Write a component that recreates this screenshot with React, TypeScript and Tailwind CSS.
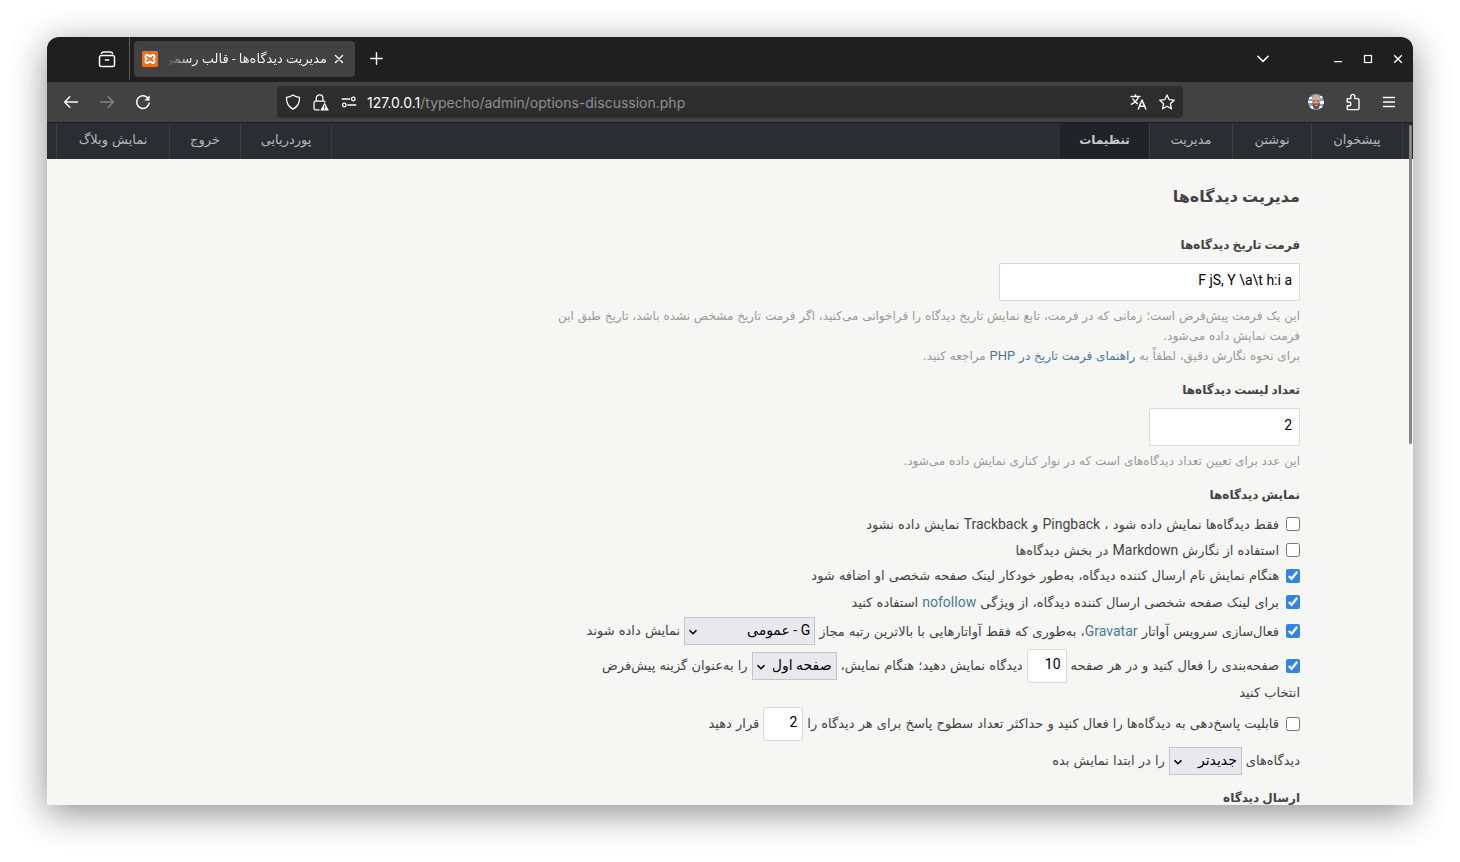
import type { ReactNode } from "react";

const MENU = [
  { text: "پیشخوان", width: "w-[91px]", active: false },
  { text: "نوشتن", width: "w-[79px]", active: false },
  { text: "مدیریت", width: "w-[83px]", active: false },
  { text: "تنظیمات", width: "w-[89px]", active: true }
];

const ACCOUNT = [
  { text: "پوردریایی", width: "w-[91px]" },
  { text: "خروج", width: "w-[71px]" },
  { text: "نمایش وبلاگ", width: "w-[113px]" }
];

function TabStrip() {
  return (
    <div className="flex h-[45px] shrink-0 items-center bg-[#1f1f1f] pb-0.5 text-[#fbfbfe]">
      <button aria-label="Recent browsing" className="ml-[51px] flex h-full w-[18px] items-center justify-center">
        <svg width="18" height="18" viewBox="0 0 18 18" fill="none" stroke="currentColor" strokeWidth="1.5" strokeLinecap="round">
          <path d="M3.4 3.6c.3-1.1 1-1.7 2.2-1.7h6.8c1.2 0 1.9.6 2.2 1.7" />
          <rect x="1.5" y="5.6" width="15" height="11" rx="2" />
          <path d="M7.4 10h3.2" />
        </svg>
      </button>
      <div className="ml-[13px] h-full w-px bg-[#5a5a5a]" />

      {/* Active tab */}
      <div className="ml-1 flex h-9 w-[221px] items-center rounded bg-[#424242] pr-[11px] pl-2">
        <svg width="16" height="16" viewBox="0 0 16 16" className="shrink-0">
          <rect width="16" height="16" rx="1.5" fill="#ee6f1f" />
          <g fill="none" stroke="#fff" strokeWidth="1.9" strokeLinecap="round" strokeLinejoin="round">
            <path d="M7.2 5.2C6 3.2 3.4 3.7 3.4 5.7c0 1.2.6 1.6 1.3 2.3-.7.7-1.3 1.1-1.3 2.3 0 2 2.6 2.5 3.8.5" />
            <path d="M8.8 5.2C10 3.2 12.6 3.7 12.6 5.7c0 1.2-.6 1.6-1.3 2.3.7.7 1.3 1.1 1.3 2.3 0 2-2.6 2.5-3.8.5" />
            <path d="M7.2 5.2c.4.5 1.2.5 1.6 0M7.2 10.8c.4-.5 1.2-.5 1.6 0" />
          </g>
        </svg>
        <span
          dir="rtl"
          className="ml-2 flex-1 overflow-hidden bg-gradient-to-l from-[#fbfbfe] from-85% to-[#424242] bg-clip-text font-[Roboto,'DejaVu_Sans',sans-serif] text-[13px] whitespace-nowrap text-transparent"
        >
          مدیریت دیدگاه‌ها - قالب رسمی
        </span>
        <button aria-label="Close tab" className="ml-[7px]">
          <svg width="10" height="10" viewBox="0 0 10 10" stroke="currentColor" strokeWidth="1.4" strokeLinecap="round">
            <path d="M1.5 1.5l7 7M8.5 1.5l-7 7" />
          </svg>
        </button>
      </div>
      <button aria-label="New tab" className="ml-[15px]">
        <svg width="13" height="13" viewBox="0 0 13 13" stroke="currentColor" strokeWidth="1.4" strokeLinecap="round">
          <path d="M6.5.8v11.4M.8 6.5h11.4" />
        </svg>
      </button>

      {/* Window buttons */}
      <div className="ml-auto flex items-center pr-[10px]">
        <button aria-label="List all tabs" className="mr-16">
          <svg width="12" height="8" viewBox="0 0 12 8" fill="none" stroke="currentColor" strokeWidth="1.5" strokeLinecap="round" strokeLinejoin="round">
            <path d="M.9 1.2L6 6.4l5.1-5.2" />
          </svg>
        </button>
        <button aria-label="Minimize" className="mr-5">
          <svg width="10" height="10" viewBox="0 0 10 10">
            <path d="M1 7h8v1.2H1z" fill="currentColor" />
          </svg>
        </button>
        <button aria-label="Maximize" className="mr-5">
          <svg width="10" height="10" viewBox="0 0 10 10" fill="none" stroke="currentColor" strokeWidth="1.2">
            <rect x="1.5" y="1.5" width="7" height="7" />
          </svg>
        </button>
        <button aria-label="Close">
          <svg width="10" height="10" viewBox="0 0 10 10" stroke="currentColor" strokeWidth="1.4">
            <path d="M1.2 1.2l7.6 7.6M8.8 1.2L1.2 8.8" />
          </svg>
        </button>
      </div>
    </div>
  );
}

function Toolbar() {
  return (
    <div className="flex h-10 shrink-0 items-center bg-[#424242] text-[#fbfbfe]">
      <div className="flex items-center gap-5 pl-4">
        <button aria-label="Back">
          <svg width="16" height="16" viewBox="0 0 16 16" fill="none" stroke="currentColor" strokeWidth="1.5" strokeLinecap="round" strokeLinejoin="round">
            <path d="M14.5 8H1.8M6.8 2.8L1.6 8l5.2 5.2" />
          </svg>
        </button>
        <button aria-label="Forward" className="text-[#858585]">
          <svg width="16" height="16" viewBox="0 0 16 16" fill="none" stroke="currentColor" strokeWidth="1.5" strokeLinecap="round" strokeLinejoin="round">
            <path d="M1.5 8h12.7M9.2 2.8L14.4 8l-5.2 5.2" />
          </svg>
        </button>
        <button aria-label="Reload">
          <svg width="16" height="16" viewBox="0 0 16 16" fill="none" stroke="currentColor" strokeWidth="1.5" strokeLinecap="round">
            <path d="M14.2 9.2A6.3 6.3 0 1 1 12.4 3.6" />
            <path d="M14.6 1.2v5.2H9.4z" fill="currentColor" stroke="none" />
          </svg>
        </button>
      </div>

      {/* Address bar */}
      <div className="mr-[125px] ml-[126px] flex h-8 flex-1 items-center rounded bg-[#2d2d2d] px-2">
        <div className="flex shrink-0 items-center gap-3">
          <svg width="16" height="16" viewBox="0 0 16 16" fill="none" stroke="currentColor" strokeWidth="1.3" strokeLinejoin="round">
            <path d="M8 .9c1.9 1.5 4.1 2.3 6.5 2.4.3 5.3-1.5 9.3-6.5 11.8C3 12.6 1.2 8.6 1.5 3.3 3.9 3.2 6.1 2.4 8 .9z" />
          </svg>
          <svg width="16" height="17" viewBox="0 0 16 17" fill="none" stroke="currentColor" strokeWidth="1.3">
            <path d="M3.3 7V4.1a3.3 3.3 0 0 1 6.6 0V7M6.5 15.8H2.6A1.6 1.6 0 0 1 1 14.2V8.8c0-1 .7-1.7 1.6-1.7h8c.9 0 1.4.5 1.6 1.3" />
            <path d="M11.6 8.6l4.3 8H7.3z" fill="currentColor" stroke="none" />
            <path d="M11.6 11.4v2.4M11.6 14.6v1" stroke="#2d2d2d" strokeWidth="1.1" />
          </svg>
          <svg width="16" height="12" viewBox="0 0 16 12" fill="none" stroke="currentColor" strokeWidth="1.3">
            <path d="M.8 3h8.400M6.400 9h8.800" />
            <circle cx="12.3" cy="3" r="1.8" />
            <circle cx="3.3" cy="9" r="1.8" />
          </svg>
        </div>
        <div dir="ltr" className="ml-[10px] flex-1 font-[Inter,sans-serif] text-[14px] whitespace-nowrap text-[#8f8f92]">
          <span className="text-[#fbfbfe]">127.0.0.1</span>/typecho/admin/options-discussion.php
        </div>
        <div className="flex items-center gap-3">
          <button aria-label="Translate page">
            <svg width="17" height="16" viewBox="0 0 17 16" fill="none" stroke="currentColor" strokeWidth="1.5" strokeLinecap="round" strokeLinejoin="round">
              <path d="M1 2.5h9M5.5.8v1.7M8.4 2.6C7.6 6 5 8.6 1.4 10.2M3 5c1.1 2 2.4 3.4 4.4 4.6" />
              <path d="M8.3 15L12 6l3.800 9M9.500 12.200h5" />
            </svg>
          </button>
          <button aria-label="Bookmark this page">
            <svg width="16" height="16" viewBox="0 0 16 16" fill="none" stroke="currentColor" strokeWidth="1.3" strokeLinejoin="round">
              <path d="M8 .9l2.1 4.7 5.1.6-3.8 3.5 1 5.1L8 12.3l-4.4 2.5 1-5.1L.8 6.2l5.1-.6z" />
            </svg>
          </button>
        </div>
      </div>

      <div className="flex items-center gap-[21px] pr-[17px]">
        <button aria-label="Account">
          <svg width="16" height="16" viewBox="0 0 16 16">
            <defs>
              <clipPath id="avatar">
                <circle cx="8" cy="8" r="8" />
              </clipPath>
            </defs>
            <g clipPath="url(#avatar)">
              <rect width="16" height="16" fill="#7fa6cf" />
              <path d="M0 3h4v2H0zM12 2h4v2h-4zM0 7h4v2H0zM12 7h4v3h-4zM2 12h3v3H2zM11 12h4v2h-4z" fill="#f4f7fa" />
              <ellipse cx="8.2" cy="7" rx="4.2" ry="6.4" fill="#d9aa8c" />
              <path d="M4.2 8.6c1.6.8 1.6 1.4 4 .6 2.4.8 2.6.2 4-.6l-.8 4.4-3.2 2.8L5 13z" fill="#7a4c3a" />
              <path d="M5.3 7h2.2M9 7h2.2" stroke="#4a2f26" strokeWidth="1.1" />
              <path d="M7 11.2h2.6" stroke="#e3c2b2" />
            </g>
          </svg>
        </button>
        <button aria-label="Extensions">
          <svg width="16" height="18" viewBox="0 0 16 18" fill="none" stroke="currentColor" strokeWidth="1.4" strokeLinejoin="round">
            <path d="M2.2 5.6h3.6V3.4a2 2 0 0 1 4 0v2.2H13c.6 0 1 .4 1 1v9c0 .6-.4 1-1 1H3.2c-.6 0-1-.4-1-1v-2.8h1.7a1.9 1.9 0 0 0 0-3.8H2.2z" />
          </svg>
        </button>
        <button aria-label="Menu">
          <svg width="14" height="12" viewBox="0 0 14 12" stroke="currentColor" strokeWidth="1.4" strokeLinecap="round">
            <path d="M1.5 1.5h11M1.5 6h11M1.5 10.5h11" />
          </svg>
        </button>
      </div>
    </div>
  );
}

function AdminNav() {
  return (
    <nav dir="rtl" className="flex h-[37px] shrink-0 justify-between border-t border-[#1c1e20] bg-[#2a2d31] text-[13px] text-[#b4b8bc]">
      <div className="mr-[10px] flex border-r border-[#3a3f45]">
        {MENU.map((item) => (
          <a
            key={item.text}
            href="#"
            className={`${item.width} flex items-center justify-center pb-0.5 ${
              item.active ? "bg-[#202328] text-[12px] font-bold text-[#c8cbce]" : "border-l border-[#3a3f45]"
            }`}
          >
            {item.text}
          </a>
        ))}
      </div>
      <div className="ml-[9px] flex border-r border-[#3a3f45]">
        {ACCOUNT.map((item) => (
          <a key={item.text} href="#" className={`${item.width} flex items-center justify-center border-l border-[#3a3f45] pb-0.5`}>
            {item.text}
          </a>
        ))}
      </div>
    </nav>
  );
}

// Latin words inside the Persian labels
function En({ children }: { children: ReactNode }) {
  return <span className="font-[Roboto,sans-serif] text-[14px]">{children}</span>;
}

function Check({ id, checked }: { id: string; checked?: boolean }) {
  return <input id={id} type="checkbox" defaultChecked={checked} className="ml-[7px] size-[14px] shrink-0 accent-[#3584e4]" />;
}

function Select({ label, width, options }: { label: string; width: string; options: string[] }) {
  return (
    <span className={`${width} relative mx-1 inline-block shrink-0`}>
      <select
        aria-label={label}
        className="h-7 w-full appearance-none border border-[#c4c4c8] bg-[#e9e9ed] pr-1 pb-0.5 pl-5 font-[Roboto,'DejaVu_Sans',sans-serif] text-[14px] text-black"
      >
        {options.map((option) => (
          <option key={option}>{option}</option>
        ))}
      </select>
      <svg className="pointer-events-none absolute top-2.5 left-1" width="10" height="10" viewBox="0 0 10 10" fill="none" stroke="#000" strokeWidth="1.6">
        <path d="M1.5 3.2L5 6.7l3.5-3.5" />
      </svg>
    </span>
  );
}

function SmallInput({ label, value }: { label: string; value: string }) {
  return (
    <input
      aria-label={label}
      defaultValue={value}
      className="mx-1 h-[34px] w-10 shrink-0 rounded-xs border border-[#d9d9d6] bg-white px-[5px] pb-1 font-[Roboto,sans-serif] text-[14px] text-black"
    />
  );
}

export default function App() {
  return (
    <div className="flex h-screen flex-col bg-white px-[47px] pt-[37px] pb-[57px] font-['DejaVu_Sans',sans-serif]">
      <div className="flex min-h-0 flex-1 flex-col overflow-hidden rounded-t-xl shadow-[0_8px_36px_rgba(0,0,0,0.45)]">
        <TabStrip />
        <Toolbar />

        <div className="relative flex min-h-0 flex-1 flex-col bg-[#f6f6f4]">
          <AdminNav />
          <div className="absolute top-[3px] right-px h-[319px] w-[3px] rounded-full bg-[#858585]" />

          <main dir="rtl" className="min-h-0 flex-1 overflow-hidden pr-[113px] text-[#444]">
            <h2 className="mt-[26px] font-[Roboto,'DejaVu_Sans',sans-serif] text-[16px] leading-6 font-bold">مدیریت دیدگاه‌ها</h2>

            <form className="w-[750px]">
              <label htmlFor="date-format" className="mt-[26px] block font-[Roboto,'DejaVu_Sans',sans-serif] text-[12px] leading-5 font-bold">
                فرمت تاریخ دیدگاه‌ها
              </label>
              <input
                id="date-format"
                dir="ltr"
                defaultValue="F jS, Y \a\t h:i a"
                className="mt-2 block h-[38px] w-[301px] rounded-xs border border-[#d9d9d6] bg-white px-[7px] pb-1 text-right font-[Roboto,sans-serif] text-[14px] text-black"
              />
              <p className="mt-[5px] text-[12px] leading-5 whitespace-nowrap text-[#999]">
                این یک فرمت پیش‌فرض است؛ زمانی که در فرمت، تابع نمایش تاریخ دیدگاه را فراخوانی می‌کنید، اگر فرمت تاریخ مشخص نشده باشد، تاریخ طبق این
                <br />
                فرمت نمایش داده می‌شود.
                <br />
                برای نحوه نگارش دقیق، لطفاً به{" "}
                <a href="#" className="text-[#467b96]">
                  راهنمای فرمت تاریخ در <span className="font-[Roboto,sans-serif] text-[13px]">PHP</span>
                </a>{" "}
                مراجعه کنید.
              </p>

              <label htmlFor="list-size" className="mt-[14px] block font-[Roboto,'DejaVu_Sans',sans-serif] text-[12px] leading-5 font-bold">
                تعداد لیست دیدگاه‌ها
              </label>
              <input
                id="list-size"
                defaultValue="2"
                className="mt-2 block h-[38px] w-[151px] rounded-xs border border-[#d9d9d6] bg-white px-[7px] pb-1 font-[Roboto,sans-serif] text-[14px] text-black"
              />
              <p className="mt-[5px] text-[12px] leading-5 whitespace-nowrap text-[#999]">
                این عدد برای تعیین تعداد دیدگاه‌های است که در نوار کناری نمایش داده می‌شود.
              </p>

              <fieldset className="text-[13px] whitespace-nowrap">
                <legend className="pt-[14px] pb-[6px] font-[Roboto,'DejaVu_Sans',sans-serif] text-[12px] leading-5 font-bold">نمایش دیدگاه‌ها</legend>
                <div className="flex h-[26px] items-center">
                  <Check id="only-comments" />
                  <label htmlFor="only-comments">
                    فقط دیدگاه‌ها نمایش داده شود ، <En>Pingback</En> و <En>Trackback</En> نمایش داده نشود
                  </label>
                </div>
                <div className="flex h-[26px] items-center">
                  <Check id="markdown" />
                  <label htmlFor="markdown">
                    استفاده از نگارش <En>Markdown</En> در بخش دیدگاه‌ها
                  </label>
                </div>
                <div className="flex h-[26px] items-center">
                  <Check id="show-url" checked />
                  <label htmlFor="show-url">هنگام نمایش نام ارسال کننده دیدگاه، به‌طور خودکار لینک صفحه شخصی او اضافه شود</label>
                </div>
                <div className="flex h-[26px] items-center">
                  <Check id="nofollow" checked />
                  <label htmlFor="nofollow">
                    برای لینک صفحه شخصی ارسال کننده دیدگاه، از ویژگی{" "}
                    <a href="#" className="text-[#467b96]">
                      <En>nofollow</En>
                    </a>{" "}
                    استفاده کنید
                  </label>
                </div>
                <div className="flex h-8 items-center">
                  <Check id="gravatar" checked />
                  <label htmlFor="gravatar">
                    فعال‌سازی سرویس آواتار{" "}
                    <a href="#" className="text-[#467b96]">
                      <En>Gravatar</En>
                    </a>
                    ، به‌طوری که فقط آواتارهایی با بالاترین رتبه مجاز
                  </label>
                  <Select label="رتبه" width="w-[131px]" options={["G - عمومی"]} />
                  <span>نمایش داده شوند</span>
                </div>
                <div className="flex h-[38px] items-center">
                  <Check id="paging" checked />
                  <label htmlFor="paging">صفحه‌بندی را فعال کنید و در هر صفحه</label>
                  <SmallInput label="تعداد در صفحه" value="10" />
                  <span>دیدگاه نمایش دهید؛ هنگام نمایش،</span>
                  <Select label="صفحه" width="w-[85px]" options={["صفحه اول", "صفحه آخر"]} />
                  <span>را به‌عنوان گزینه پیش‌فرض</span>
                </div>
                <p className="leading-4">انتخاب کنید</p>
                <div className="flex h-[46px] items-center">
                  <Check id="threaded" />
                  <label htmlFor="threaded">قابلیت پاسخ‌دهی به دیدگاه‌ها را فعال کنید و حداکثر تعداد سطوح پاسخ برای هر دیدگاه را</label>
                  <SmallInput label="سطوح پاسخ" value="2" />
                  <span>قرار دهید</span>
                </div>
                <div className="flex h-7 items-center">
                  <span>دیدگاه‌های</span>
                  <Select label="ترتیب" width="w-[73px]" options={["جدیدتر", "قدیمی‌تر"]} />
                  <span>را در ابتدا نمایش بده</span>
                </div>
              </fieldset>

              <h3 className="mt-[13px] font-[Roboto,'DejaVu_Sans',sans-serif] text-[12px] leading-5 font-bold">ارسال دیدگاه</h3>
            </form>
          </main>
        </div>
      </div>
    </div>
  );
}
